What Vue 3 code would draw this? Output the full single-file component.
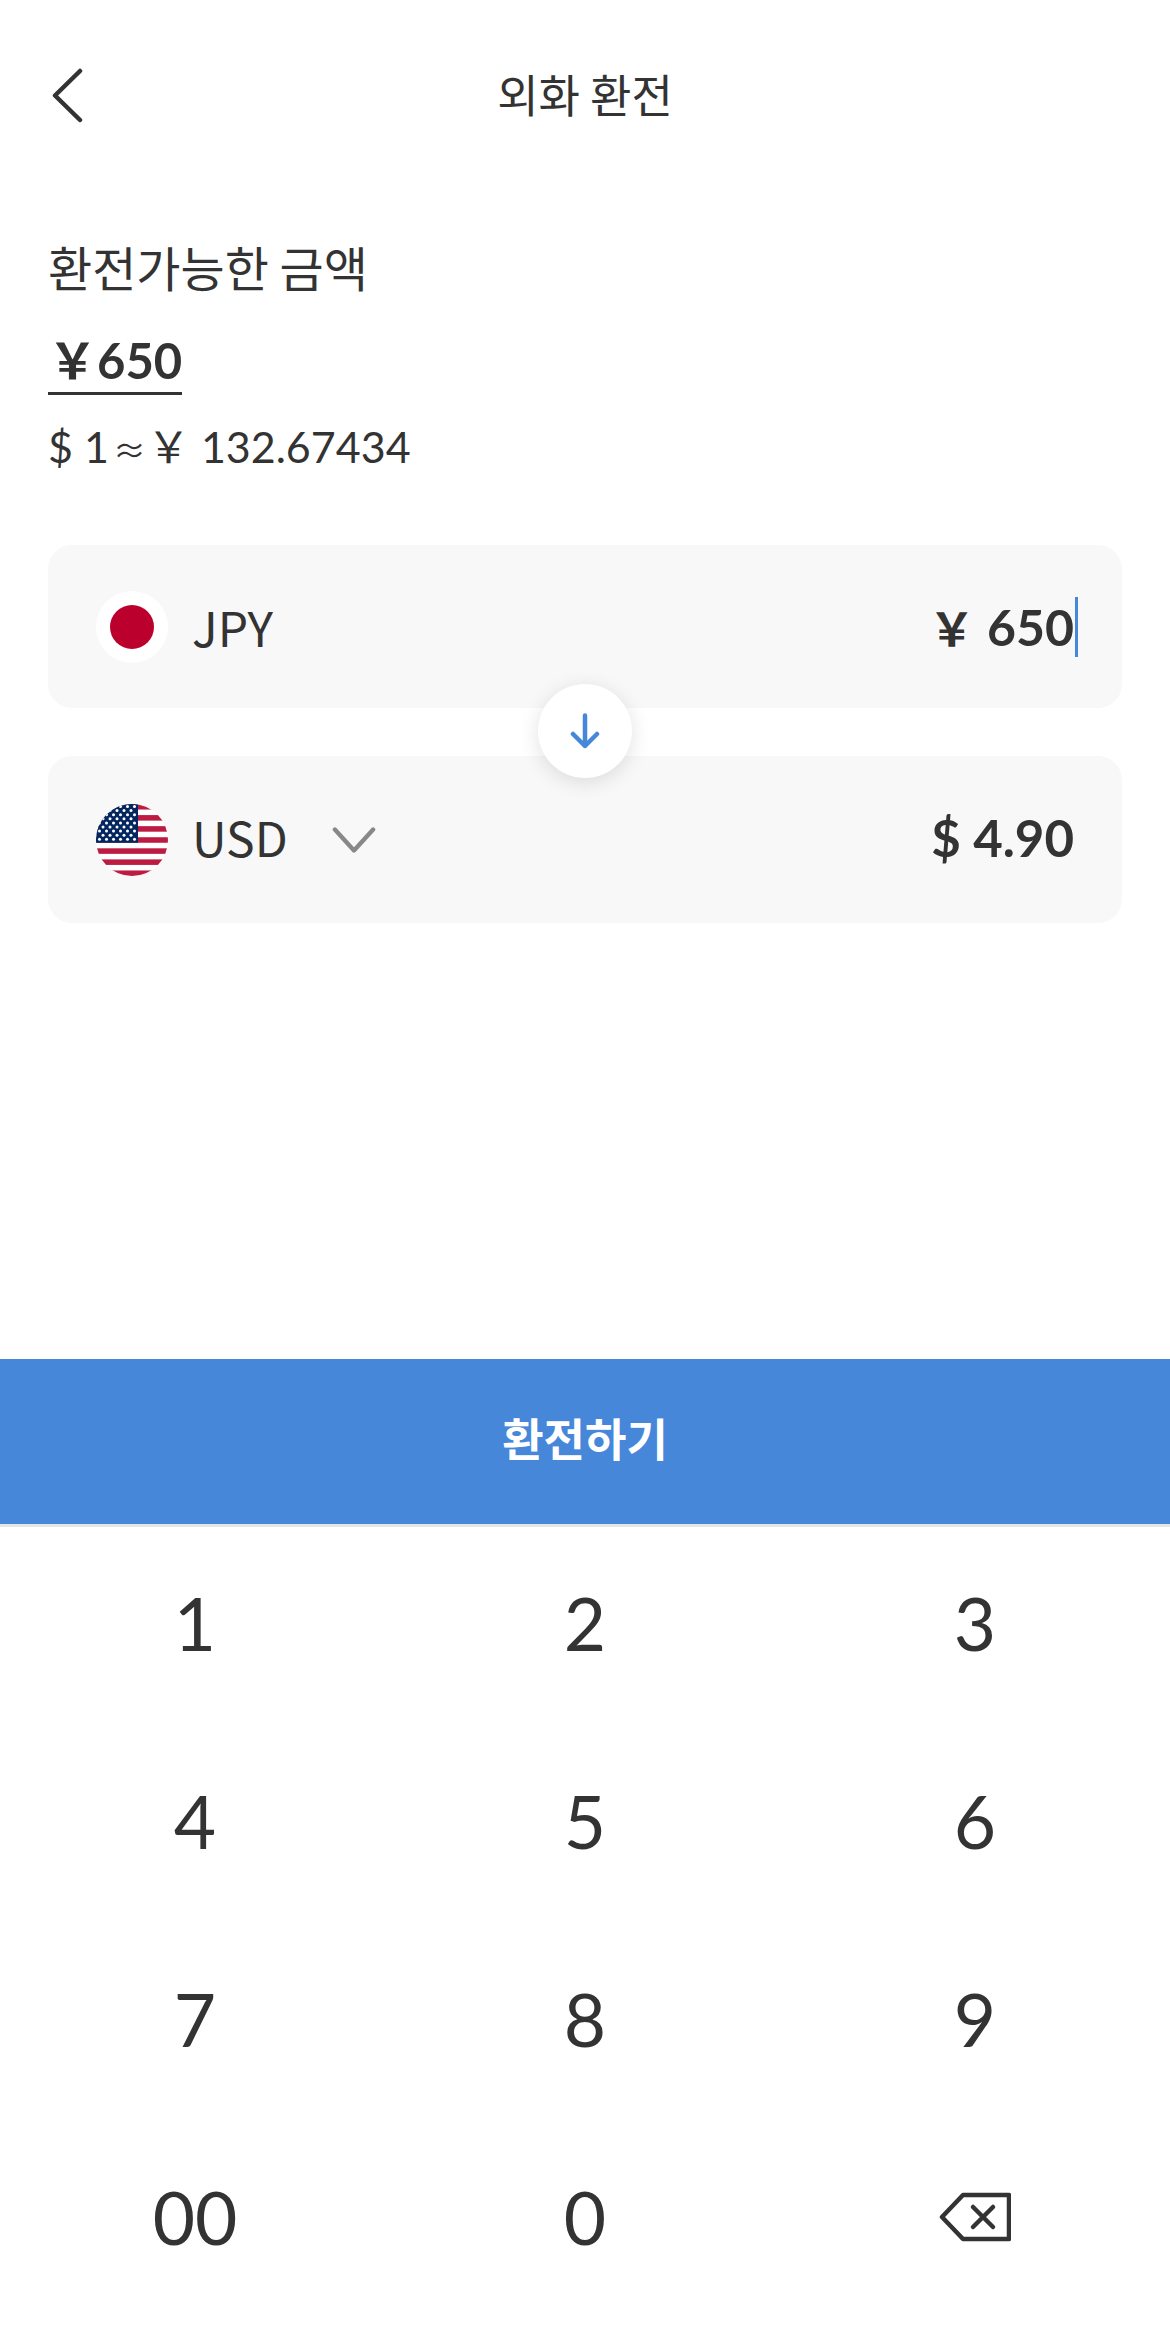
<template>
  <div class="exchange-page">
    <header class="top-bar">
      <button class="back-button">
        <svg width="32" height="56" viewBox="0 0 32 56">
          <path d="M28 3 L3 27.5 L28 52" fill="none" stroke="#333" stroke-width="4.5" stroke-linecap="round" stroke-linejoin="round" />
        </svg>
      </button>
      <h1 class="page-title">외화 환전</h1>
    </header>

    <section class="summary">
      <div class="summary-label">환전가능한 금액</div>
      <div class="summary-amount">￥650</div>
      <div class="summary-rate">$ 1<span class="approx">≈</span>￥ 132.67434</div>
    </section>

    <section class="cards">
      <div class="currency-card from">
        <div class="currency">
          <svg class="flag" width="72" height="72" viewBox="0 0 72 72">
            <circle cx="36" cy="36" r="36" fill="#fff" />
            <circle cx="36" cy="36" r="22" fill="#bc002d" />
          </svg>
          <span class="code">JPY</span>
        </div>
        <div class="amount">
          <span class="yen">￥</span><span> 650</span>
          <span class="caret"></span>
        </div>
      </div>

      <div class="swap-button">
        <svg width="30" height="36" viewBox="0 0 30 36">
          <path d="M15 2.5 V33 M3 21 L15 33 L27 21" fill="none" stroke="#4687da" stroke-width="4.5" stroke-linecap="round" stroke-linejoin="round" />
        </svg>
      </div>

      <div class="currency-card to">
        <div class="currency">
          <svg class="flag" width="72" height="72" viewBox="0 0 72 72">
            <defs>
              <clipPath id="flag-clip"><circle cx="36" cy="36" r="36" /></clipPath>
            </defs>
            <g clip-path="url(#flag-clip)">
              <rect width="72" height="72" fill="#fff" />
              <rect v-for="i in 7" :key="i" x="0" :y="(i - 1) * 2 * stripe" width="72" :height="stripe" fill="#bd1c42" />
              <rect width="42" :height="stripe * 7" fill="#04265f" />
              <circle v-for="(s, i) in stars" :key="'s' + i" :cx="s.x" :cy="s.y" r="1.5" fill="#fff" />
            </g>
          </svg>
          <span class="code usd">USD</span>
          <svg class="dropdown" width="44" height="28" viewBox="0 0 46 28">
            <path d="M3 3 L23 25 L43 3" fill="none" stroke="#888" stroke-width="4.5" stroke-linecap="round" stroke-linejoin="round" />
          </svg>
        </div>
        <div class="amount usd-amount">$ 4.90</div>
      </div>
    </section>

    <div class="spacer"></div>

    <button class="submit-button">환전하기</button>

    <div class="keypad">
      <button v-for="key in keys" :key="key" class="key">{{ key }}</button>
      <button class="key">
        <svg width="72" height="52" viewBox="0 0 72 52">
          <path d="M3 26 L24 4 H70 V48 H24 Z" fill="none" stroke="#333" stroke-width="4.5" stroke-linejoin="round" />
          <path d="M34 16 L54 36 M54 16 L34 36" fill="none" stroke="#333" stroke-width="4.5" stroke-linecap="round" />
        </svg>
      </button>
    </div>
  </div>
</template>

<script setup>
const keys = ['1', '2', '3', '4', '5', '6', '7', '8', '9', '00', '0']

const stripe = 72 / 13

// 9 rows of stars in the blue corner, alternating 6 and 5
const stars = []
for (let row = 0; row < 9; row++) {
  const count = row % 2 === 0 ? 6 : 5
  for (let col = 0; col < count; col++) {
    stars.push({
      x: (row % 2 === 0 ? 3.5 : 7) + col * 7,
      y: 2.5 + row * 4.1
    })
  }
}
</script>

<style>
html,
body {
  margin: 0;
  background: #fff;
}
</style>

<style scoped>
.exchange-page {
  width: 1170px;
  height: 2338px;
  display: flex;
  flex-direction: column;
  background: #fff;
  color: #333;
  font-family: Lato, "Noto Sans CJK KR", sans-serif;
}

button {
  border: none;
  background: none;
  padding: 0;
  color: inherit;
  font-family: inherit;
}

.top-bar {
  position: relative;
  box-sizing: border-box;
  height: 230px;
  padding-top: 71px;
  display: flex;
  align-items: flex-start;
  justify-content: center;
}

.back-button {
  position: absolute;
  left: 52px;
  top: 68px;
  height: 56px;
}

.page-title {
  margin: 0;
  font-size: 45px;
  line-height: 1;
  font-weight: 400;
  font-family: "Noto Sans CJK KR", sans-serif;
}

.summary {
  padding: 0 48px;
}

.summary-label {
  font-size: 48px;
  line-height: 72px;
  font-family: "Noto Sans CJK KR", sans-serif;
}

.summary-amount {
  display: inline-block;
  margin-top: 26px;
  width: 134px;
  border-bottom: 3px solid #333;
  font-size: 49px;
  font-weight: 700;
  line-height: 64px;
  text-align: right;
  white-space: nowrap;
}

.summary-rate {
  margin-top: 22px;
  font-size: 43px;
  line-height: 60px;
}

.approx {
  padding: 0 1px 0 4px;
  font-family: "Noto Sans CJK KR", sans-serif;
  font-size: 33px;
  line-height: 0;
}

.cards {
  position: relative;
  margin-top: 68px;
  padding: 0 48px;
  display: flex;
  flex-direction: column;
  gap: 48px;
}

.currency-card {
  display: flex;
  align-items: center;
  justify-content: space-between;
  padding: 0 48px;
  border-radius: 24px;
  background: #f8f8f8;
}

.currency-card.from {
  height: 163px;
}

.currency-card.to {
  height: 167px;
}

.currency {
  display: flex;
  align-items: center;
}

.flag {
  display: block;
}

.code {
  margin-left: 24px;
  padding-bottom: 2px;
  font-size: 48px;
  line-height: 1;
  font-family: "Noto Sans CJK KR", sans-serif;
}

.code.usd {
  padding-bottom: 8px;
}

.dropdown {
  margin-left: 44px;
}

.amount {
  position: relative;
  font-size: 50px;
  font-weight: 700;
  line-height: 1;
}

.yen {
  font-size: 46px;
}

.usd-amount {
  padding-bottom: 4px;
  font-size: 51px;
}

.caret {
  position: absolute;
  right: -4px;
  top: -5px;
  width: 3px;
  height: 60px;
  background: #4687da;
}

.swap-button {
  position: absolute;
  left: 538px;
  top: 139px;
  width: 94px;
  height: 94px;
  display: flex;
  align-items: center;
  justify-content: center;
  border-radius: 50%;
  background: #fff;
  box-shadow: 0 4px 20px rgba(0, 0, 0, 0.12);
}

.spacer {
  flex: 1;
}

.submit-button {
  flex-shrink: 0;
  padding-bottom: 8px;
  box-sizing: content-box;
  height: 157px;
  background: #4687da;
  color: #fff;
  font-size: 45px;
  font-weight: 700;
  font-family: "Noto Sans CJK KR", sans-serif;
  border-bottom: 3px solid #e5e5e5;
}

.keypad {
  height: 811px;
  display: grid;
  grid-template-columns: repeat(3, 1fr);
  grid-auto-rows: 198px;
}

.key {
  display: flex;
  align-items: center;
  justify-content: center;
  padding-bottom: 6px;
  font-size: 73px;
  line-height: 1;
}
</style>
